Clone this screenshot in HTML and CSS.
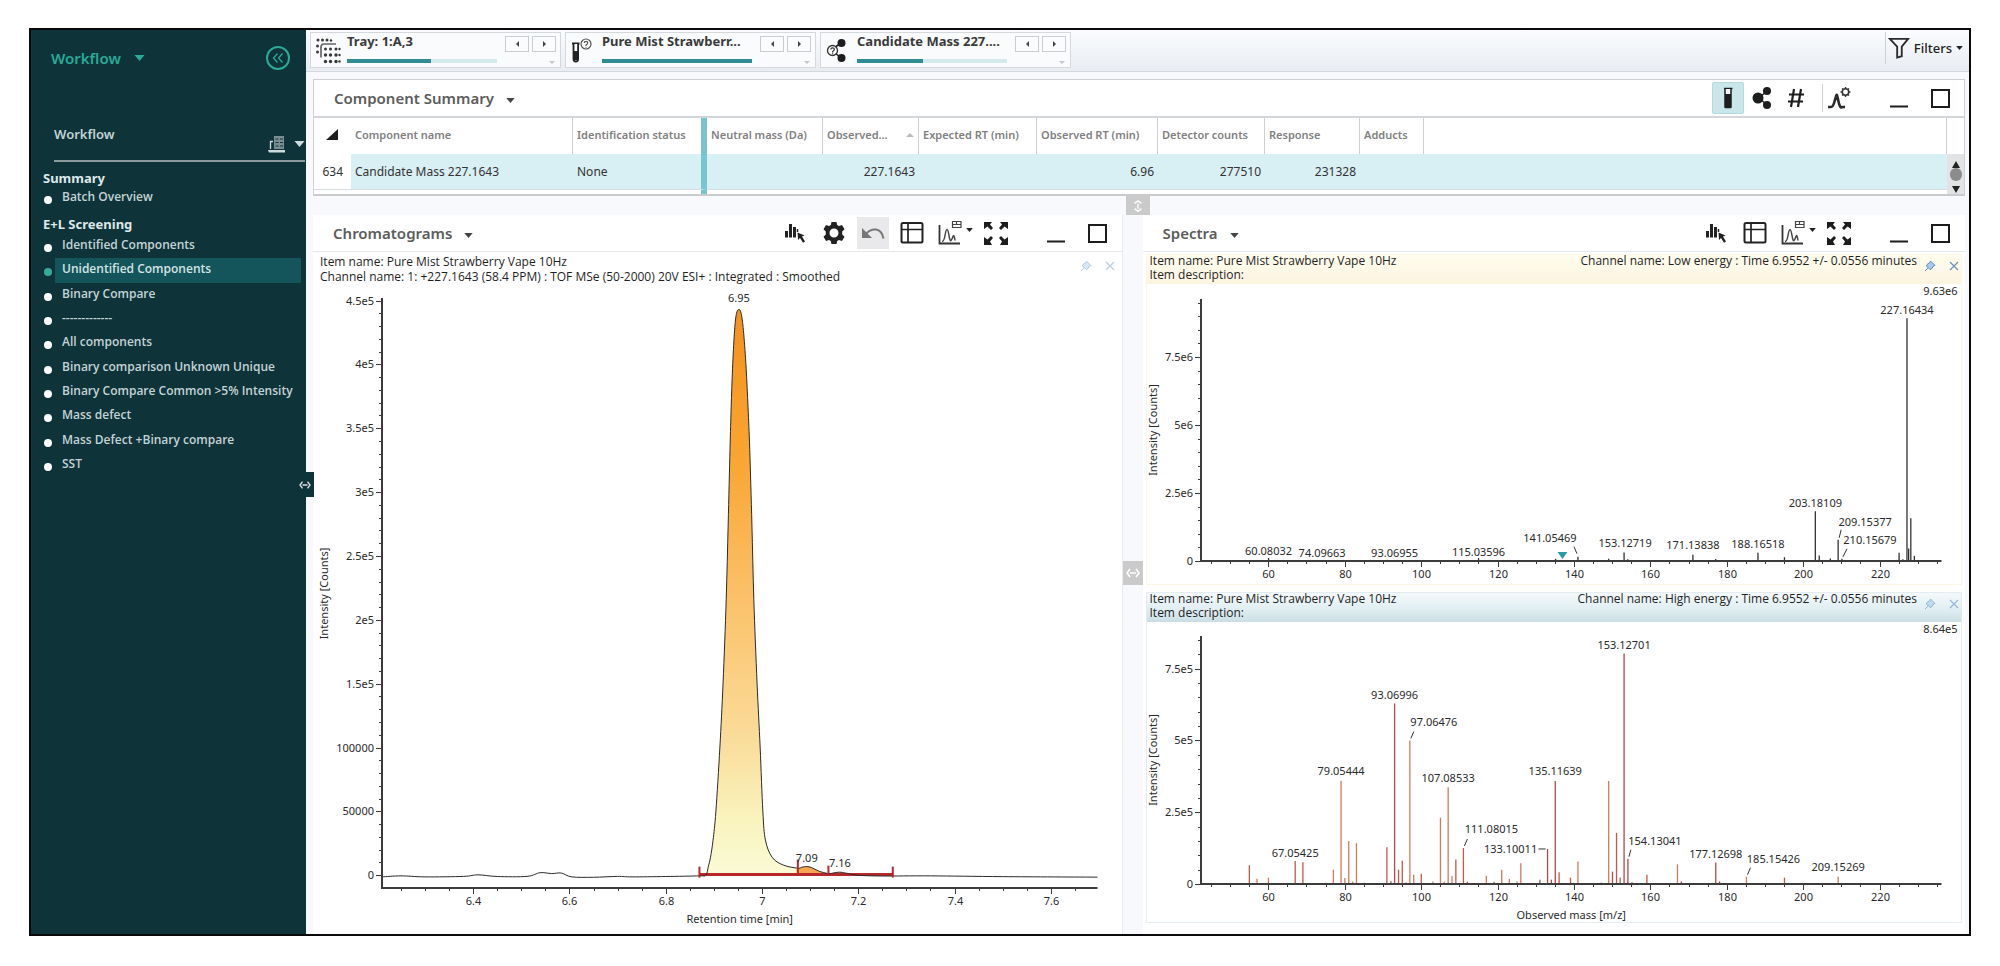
FILE: index.html
```html
<!DOCTYPE html>
<html lang="en">
<head>
<meta charset="utf-8">
<title>Workflow</title>
<meta name="viewport" content="width=device-width, initial-scale=1">
<link rel="stylesheet" href="styles.css">
</head>
<body>
<svg class="sprite" aria-hidden="true">
  <symbol id="i-caret" viewBox="0 0 10 6"><path d="M0 0h10L5 6z" fill="currentColor"/></symbol>
  <symbol id="i-collapse" viewBox="0 0 26 26"><circle cx="13" cy="13" r="11" fill="none" stroke="currentColor" stroke-width="2"/><path d="M12.500 8.500 8.500 13l4 4.500M17.500 8.500 13.500 13l4 4.500" fill="none" stroke="currentColor" stroke-width="1.300"/></symbol>
  <symbol id="i-server" viewBox="0 0 18 18"><path d="M6 1h10v13H6z" fill="currentColor" opacity=".55"/><path d="M7.500 4h3M12 4h3M7.500 7.500h3M12 7.500h3M7.500 11h3M12 11h3" stroke="#0e343a" stroke-width="1"/><path d="M5 6.500H2.500V14" fill="none" stroke="currentColor" stroke-width="1.300"/><path d="M0 15h17v2.500H1z" fill="currentColor"/></symbol>
  <symbol id="i-tray" viewBox="0 0 26 26"><g fill="#3a3a3a"><circle cx="3" cy="2" r="1.500"/><circle cx="7.500" cy="2" r="1.500"/><circle cx="12" cy="2" r="1.500"/><circle cx="16" cy="2.500" r="1.200"/><circle cx="2.500" cy="8" r="1.500"/><circle cx="2.500" cy="14" r="1.500"/><circle cx="10.500" cy="11" r="1.500"/><circle cx="15.500" cy="11" r="1.500"/><circle cx="21" cy="11" r="1.500"/><circle cx="24.500" cy="11" r="1.200"/><circle cx="10.500" cy="17" r="1.700"/><circle cx="15.500" cy="17" r="1.700"/><circle cx="21" cy="17" r="1.700"/><circle cx="24.500" cy="17" r="1.200"/><circle cx="10.500" cy="23.500" r="1.700"/><circle cx="15.500" cy="23.500" r="1.700"/><circle cx="21" cy="23.500" r="1.700"/><circle cx="24.500" cy="23.500" r="1.200"/></g><path d="M6 19.500V9q0-3 3-3h12" fill="none" stroke="#666" stroke-width="1.700"/></symbol>
  <symbol id="i-vial-q" viewBox="0 0 26 26"><path d="M2 5.500h7.500" stroke="#222" stroke-width="2"/><path d="M3.500 6v15q0 2.500 2.300 2.500T8.100 21V6" fill="#fff" stroke="#222" stroke-width="1.800"/><path d="M3.500 13h4.600v9H3.500z" fill="#222"/><circle cx="16" cy="6" r="5" fill="#fff" stroke="#555" stroke-width="1.200"/><path d="M14.300 5q0-1.700 1.700-1.700T17.700 5q0 1-1.700 2v1M16 8.700v1" fill="none" stroke="#555" stroke-width="1.200"/></symbol>
  <symbol id="i-mol-q" viewBox="0 0 26 26"><path d="m9 10 7-5M9 14l7 6" stroke="#222" stroke-width="1.600"/><circle cx="16.500" cy="5" r="4" fill="#1d1d1d"/><circle cx="16.500" cy="20" r="4" fill="#1d1d1d"/><circle cx="7.500" cy="12.500" r="5" fill="#fff" stroke="#333" stroke-width="1.300"/><path d="M5.900 11.500q0-1.700 1.700-1.700t1.700 1.700q0 1-1.700 2v1M7.600 15.300v1" fill="none" stroke="#333" stroke-width="1.200"/></symbol>
  <symbol id="i-funnel" viewBox="0 0 24 24"><path d="M2 2h20l-7 8.500V21l-5 1.500v-12z" fill="none" stroke="#2b2b2b" stroke-width="2"/></symbol>
  <symbol id="i-vial" viewBox="0 0 24 24"><path d="M8 2.500h8.500" stroke="#1d1d1d" stroke-width="1.500"/><path d="M9 3v18q0 .5.500.5h5q.5 0 .5-.5V3" fill="#eef8f9" stroke="#1d1d1d" stroke-width="1.500"/><path d="M9 8h6v13H9z" fill="#1d1d1d"/></symbol>
  <symbol id="i-mol" viewBox="0 0 24 24"><path d="M9 12 17 5M9 12l8 7" stroke="#1d1d1d" stroke-width="1.500"/><circle cx="8" cy="12" r="5.500" fill="#1d1d1d"/><circle cx="17" cy="5" r="4" fill="#1d1d1d"/><circle cx="17" cy="19" r="4" fill="#1d1d1d"/></symbol>
  <symbol id="i-hash" viewBox="0 0 24 24"><path d="M10 3 7 21M17 3l-3 18M5 8.500h15M4 15.500h15" stroke="#1d1d1d" stroke-width="2.200"/></symbol>
  <symbol id="i-peakset" viewBox="0 0 24 24"><path d="M1 21h3q2 0 3.500-5.500T9.500 9t2 6.500T15.500 21H18" fill="none" stroke="#2b2b2b" stroke-width="2.600"/><path d="M9.500 8 12 16l-2.500-2L7 16z" fill="#2b2b2b"/><circle cx="18.500" cy="6" r="3.200" fill="none" stroke="#333" stroke-width="1.500"/><path d="M18.500 1v1.500M18.500 9.500V11M13.500 6H15M22 6h1.500M15 2.500l1 1M21 8.500l1 1M22 2.500l-1 1M15 9.500l1-1" stroke="#333" stroke-width="1.400"/></symbol>
  <symbol id="i-bars" viewBox="0 0 24 24"><path d="M2 10h3v6.500H2zM6 3h3v13.500H6zM10 6h3v10.500h-3z" fill="#222"/><path d="M14.500 11V8" stroke="#222" stroke-width="1.500"/><path d="m14.500 11.500 7 3-2.500 1 3 5-2 1.200-3-4.700-2 2z" fill="#222"/></symbol>
  <symbol id="i-gear" viewBox="0 0 24 24"><path fill="#222" fill-rule="evenodd" d="M9.500 1h5l.7 3 1.800 1 3-1 2.500 4.300-2.300 2.200v3l2.300 2.200L20 20l-3-1-1.800 1-.7 3h-5l-.7-3L7 19l-3 1-2.500-4.300L3.800 13.500v-3L1.500 8.300 4 4l3 1 1.800-1zM12 7.500a4.500 4.500 0 1 0 0 9 4.500 4.500 0 0 0 0-9z"/></symbol>
  <symbol id="i-undo" viewBox="0 0 24 24"><path d="M5 13Q9 8 15 8.500q6 1 7.500 9" fill="none" stroke="#777" stroke-width="2"/><path d="M1 7v10h10z" fill="#777"/></symbol>
  <symbol id="i-grid" viewBox="0 0 24 24"><rect x="1.500" y="2" width="21" height="19.500" rx="1.500" fill="none" stroke="#222" stroke-width="2"/><path d="M8 3v18M2 8.500h20" stroke="#222" stroke-width="1.700"/></symbol>
  <symbol id="i-plot" viewBox="0 0 24 26"><path d="M1.500 5v18.500H22" fill="none" stroke="#333" stroke-width="1.800"/><path d="M4 21.500q2 0 3-6T9 9.500t2 6 2 5 2-4 2 4" fill="none" stroke="#444" stroke-width="1.500"/><path d="M14.500 1.500H23v6h-8.500zM14.500 4.500H23M18.500 1.500v3" fill="none" stroke="#444" stroke-width="1.200"/></symbol>
  <symbol id="i-expand" viewBox="0 0 24 24"><path fill="#1d1d1d" d="M0 1h8L6 3.500 9 7 7 9 3.500 5.500 0 8zM24 1v7l-3.500-2.500L17 9l-2-2 3-3.500L16 1zM0 24v-8l3.500 2.500L7 15l2 2-3 3.500L8 24zM24 24h-8l2-3.500-3-3.500 2-2 3.500 3.500L24 16z"/></symbol>
  <symbol id="i-min" viewBox="0 0 24 24"><path d="M3 20.500h18" stroke="#1d1d1d" stroke-width="2"/></symbol>
  <symbol id="i-max" viewBox="0 0 24 24"><rect x="4" y="4" width="17" height="17" fill="none" stroke="#1d1d1d" stroke-width="2"/></symbol>
  <symbol id="i-pin" viewBox="0 0 12 12"><path d="M6.500 1 11 5.500 9.500 6 7.500 9 6 9.500 2.500 6 3 4.500 6 2.500z" fill="#a9c9ea" stroke="#5d8fc4" stroke-width="1"/><path d="M4 8 1 11" stroke="#5d8fc4" stroke-width="1"/></symbol>
  <symbol id="i-x" viewBox="0 0 12 12"><path d="m2 2 8 8M10 2l-8 8" stroke="#6a93bd" stroke-width="1.200"/></symbol>
  <symbol id="i-split" viewBox="0 0 16 12"><path d="M5 2 2 6l3 4M11 2l3 4-3 4M5 6h6" fill="none" stroke="currentColor" stroke-width="1.600"/></symbol>
</svg>

<div class="frame">
  <nav class="sidebar" aria-label="Workflow">
    <div class="side-top">
      <button class="side-menu">Workflow <svg class="caret-lg"><use href="#i-caret"/></svg></button>
      <button class="side-collapse" aria-label="Collapse"><svg><use href="#i-collapse"/></svg></button>
    </div>
    <div class="side-head">
      <h2>Workflow</h2>
      <button aria-label="Workflow source"><svg class="server"><use href="#i-server"/></svg><svg class="caret-lg"><use href="#i-caret"/></svg></button>
    </div>
    <h3>Summary</h3>
    <ul class="steps">
      <li><a href="#">Batch Overview</a></li>
    </ul>
    <h3 class="second">E+L Screening</h3>
    <ul class="steps long">
      <li><a href="#">Identified Components</a></li>
      <li class="on"><a href="#" aria-current="page">Unidentified Components</a></li>
      <li><a href="#">Binary Compare</a></li>
      <li><a href="#">-------------</a></li>
      <li><a href="#">All components</a></li>
      <li><a href="#">Binary comparison Unknown Unique</a></li>
      <li><a href="#">Binary Compare Common &gt;5% Intensity</a></li>
      <li><a href="#">Mass defect</a></li>
      <li><a href="#">Mass Defect +Binary compare</a></li>
      <li><a href="#">SST</a></li>
    </ul>
    <button class="side-handle" aria-label="Resize sidebar"><svg><use href="#i-split"/></svg></button>
  </nav>

  <main class="main">
    <header class="topbar">
      <div class="picker">
        <svg class="picker-icon"><use href="#i-tray"/></svg>
        <div class="picker-text"><strong>Tray: 1:A,3</strong><div class="bar"><div class="fill" style="width:56%"></div></div></div>
        <div class="picker-nav"><button aria-label="Previous tray"><i class="tri left"></i></button><button aria-label="Next tray"><i class="tri right"></i></button><i class="tri down"></i></div>
      </div>
      <div class="picker">
        <svg class="picker-icon"><use href="#i-vial-q"/></svg>
        <div class="picker-text"><strong>Pure Mist Strawberr...</strong><div class="bar"><div class="fill" style="width:100%"></div></div></div>
        <div class="picker-nav"><button aria-label="Previous item"><i class="tri left"></i></button><button aria-label="Next item"><i class="tri right"></i></button><i class="tri down"></i></div>
      </div>
      <div class="picker">
        <svg class="picker-icon"><use href="#i-mol-q"/></svg>
        <div class="picker-text"><strong>Candidate Mass 227....</strong><div class="bar"><div class="fill" style="width:44%"></div></div></div>
        <div class="picker-nav"><button aria-label="Previous component"><i class="tri left"></i></button><button aria-label="Next component"><i class="tri right"></i></button><i class="tri down"></i></div>
      </div>
      <button class="filters"><svg class="funnel"><use href="#i-funnel"/></svg>Filters<svg class="caret-sm"><use href="#i-caret"/></svg></button>
    </header>

    <section class="panel summary">
      <div class="panel-head">
        <button class="title">Component Summary <svg class="caret"><use href="#i-caret"/></svg></button>
        <div class="tools tight">
          <button class="tool active" aria-label="Sample view"><svg><use href="#i-vial"/></svg></button>
          <button class="tool" aria-label="Structure view"><svg><use href="#i-mol"/></svg></button>
          <button class="tool" aria-label="Count view"><svg><use href="#i-hash"/></svg></button>
          <button class="tool ruled" aria-label="Peak settings"><svg><use href="#i-peakset"/></svg></button>
          <div class="win">
            <button class="tool" aria-label="Minimize"><svg><use href="#i-min"/></svg></button>
            <button class="tool" aria-label="Maximize"><svg><use href="#i-max"/></svg></button>
          </div>
        </div>
      </div>
      <div class="grid-wrap">
        <table>
          <colgroup><col class="c-row"><col class="c-name"><col class="c-id"><col class="c-mass"><col class="c-obs"><col class="c-ert"><col class="c-ort"><col class="c-det"><col class="c-res"><col class="c-add"><col></colgroup>
          <thead>
            <tr><th aria-label="Select all"><i class="corner"></i></th><th>Component name</th><th class="pinned">Identification status</th><th>Neutral mass (Da)</th><th><span class="sorted">Observed...<i class="tri up"></i></span></th><th>Expected RT (min)</th><th>Observed RT (min)</th><th>Detector counts</th><th>Response</th><th>Adducts</th><th></th></tr>
          </thead>
          <tbody>
            <tr><td class="rownum">634</td><td>Candidate Mass 227.1643</td><td class="pinned">None</td><td></td><td class="num">227.1643</td><td></td><td class="num">6.96</td><td class="num">277510</td><td class="num">231328</td><td></td><td></td></tr>
            <tr class="next"><td></td><td></td><td class="pinned"></td><td></td><td></td><td></td><td></td><td></td><td></td><td></td><td></td></tr>
          </tbody>
        </table>
        <div class="scroll" aria-hidden="true"><div class="scroll-head"></div><div class="scroll-track"><i class="tri s-up"></i><i class="thumb"></i><i class="tri s-down"></i></div></div>
      </div>
    </section>

    <div class="split-row"><button aria-label="Resize rows"><svg><use href="#i-split"/></svg></button></div>

    <div class="lower">
      <section class="panel chrom">
        <div class="panel-head">
          <button class="title">Chromatograms <svg class="caret"><use href="#i-caret"/></svg></button>
          <div class="tools">
            <button class="tool" aria-label="Select bars"><svg><use href="#i-bars"/></svg></button>
            <button class="tool" aria-label="Settings"><svg><use href="#i-gear"/></svg></button>
            <button class="tool muted" aria-label="Undo"><svg><use href="#i-undo"/></svg></button>
            <button class="tool" aria-label="Table"><svg><use href="#i-grid"/></svg></button>
            <button class="tool drop" aria-label="Plot options"><svg class="plot"><use href="#i-plot"/></svg><svg class="caret-sm"><use href="#i-caret"/></svg></button>
            <button class="tool" aria-label="Expand"><svg><use href="#i-expand"/></svg></button>
            <div class="win">
              <button class="tool" aria-label="Minimize"><svg><use href="#i-min"/></svg></button>
              <button class="tool" aria-label="Maximize"><svg><use href="#i-max"/></svg></button>
            </div>
          </div>
        </div>
        <div class="plot-head plain">
          <p>Item name: Pure Mist Strawberry Vape 10Hz<br>Channel name: 1: +227.1643 (58.4 PPM) : TOF MSe (50-2000) 20V ESI+ : Integrated : Smoothed</p>
          <div class="pins faint"><button aria-label="Pin"><svg><use href="#i-pin"/></svg></button><button aria-label="Close"><svg><use href="#i-x"/></svg></button></div>
        </div>
        <svg class="chart" id="chrom" role="img" aria-label="Chromatogram"></svg>
      </section>

      <div class="split-col"><button aria-label="Resize columns"><svg><use href="#i-split"/></svg></button></div>

      <section class="panel spectra">
        <div class="panel-head">
          <button class="title">Spectra <svg class="caret"><use href="#i-caret"/></svg></button>
          <div class="tools">
            <button class="tool" aria-label="Select bars"><svg><use href="#i-bars"/></svg></button>
            <button class="tool" aria-label="Table"><svg><use href="#i-grid"/></svg></button>
            <button class="tool drop" aria-label="Plot options"><svg class="plot"><use href="#i-plot"/></svg><svg class="caret-sm"><use href="#i-caret"/></svg></button>
            <button class="tool" aria-label="Expand"><svg><use href="#i-expand"/></svg></button>
            <div class="win">
              <button class="tool" aria-label="Minimize"><svg><use href="#i-min"/></svg></button>
              <button class="tool" aria-label="Maximize"><svg><use href="#i-max"/></svg></button>
            </div>
          </div>
        </div>
        <div class="cards">
          <article class="card low">
            <div class="plot-head">
              <p>Item name: Pure Mist Strawberry Vape 10Hz<br>Item description:</p>
              <p class="channel">Channel name: Low energy : Time 6.9552 +/- 0.0556 minutes</p>
              <div class="pins"><button aria-label="Pin"><svg><use href="#i-pin"/></svg></button><button aria-label="Close"><svg><use href="#i-x"/></svg></button></div>
            </div>
            <svg class="chart" id="low" role="img" aria-label="Low energy spectrum"></svg>
          </article>
          <article class="card high">
            <div class="plot-head">
              <p>Item name: Pure Mist Strawberry Vape 10Hz<br>Item description:</p>
              <p class="channel">Channel name: High energy : Time 6.9552 +/- 0.0556 minutes</p>
              <div class="pins soft"><button aria-label="Pin"><svg><use href="#i-pin"/></svg></button><button aria-label="Close"><svg><use href="#i-x"/></svg></button></div>
            </div>
            <svg class="chart" id="high" role="img" aria-label="High energy spectrum"></svg>
          </article>
        </div>
      </section>
    </div>
  </main>
</div>
<script src="charts.js"></script>
</body>
</html>
```

FILE: styles.css
```css
* { box-sizing: border-box; }
html { height: 100%; }
body {
  margin: 0;
  height: 100%;
  min-height: 760px;
  padding: 28px 29px 30px;
  display: flex;
  background: #fff;
  color: #333;
  font: 11px/15px "Noto Sans", "Open Sans", sans-serif;
}
button { margin: 0; padding: 0; border: 0; background: none; color: inherit; font: inherit; cursor: pointer; }
svg { display: block; flex: none; }
h2, h3, p, ul { margin: 0; padding: 0; }
.sprite { position: absolute; width: 0; height: 0; }
.frame { flex: 1; min-width: 0; display: flex; border: 2px solid #0a0a0a; background: #f8fafc; }
.caret { width: 9px; height: 5px; color: #444; }
.caret-lg { width: 11px; height: 6px; }
.caret-sm { width: 7px; height: 4px; color: #222; }

/* Sidebar */
.sidebar { position: relative; flex: none; width: 275px; background: #0e343a; color: #c3d3d5; }
.side-top { display: flex; justify-content: space-between; align-items: center; height: 56px; padding: 0 15px 0 20px; color: #2aaa97; }
.side-menu { display: flex; align-items: center; gap: 13px; font-size: 15px; font-weight: 600; }
.side-collapse svg { width: 26px; height: 26px; }
.side-head { display: flex; justify-content: space-between; align-items: flex-start; height: 76px; margin: 0 1px 0 23px; padding-top: 38px; border-bottom: 2px solid #8b9b9d; }
.side-head h2 { font-size: 13px; line-height: 20px; font-weight: 600; }
.side-head button { display: flex; align-items: center; gap: 8px; padding-top: 11px; color: #cfdcdd; }
.server { width: 18px; height: 18px; }
.sidebar h3 { padding: 6px 0 0 12px; font-size: 13px; line-height: 20px; font-weight: 700; color: #dfe8e9; }
.sidebar h3.second { padding-top: 6px; }
.steps { display: grid; list-style: none; padding: 0 5px 0 13px; }
.steps li { display: grid; grid-template-columns: 8px 1fr; column-gap: 3px; align-items: center; min-height: 20px; }
.steps li::before { content: ""; width: 8px; height: 8px; margin-top: 4px; border-radius: 50%; background: #fff; }
.steps li.on::before { background: #3aa99b; }
.steps a { display: flex; align-items: center; height: 100%; padding: 0 7px 3px; color: inherit; text-decoration: none; font-family: "Open Sans", sans-serif; font-size: 12px; font-weight: 600; white-space: nowrap; }
.steps .on a { background: #14545b; color: #d3e4e6; }
.steps.long { height: 243px; grid-auto-rows: 1fr; }
.side-handle { position: absolute; left: calc(100% - 10px); top: 442px; width: 18px; height: 25px; display: grid; place-items: center; background: #0e343a; color: #d8e3e4; }
.side-handle svg { width: 14px; height: 10px; }

/* Top bar */
.main { flex: 1; min-width: 0; display: flex; flex-direction: column; background: #f7f9fc; }
.topbar { display: flex; gap: 4px; height: 42px; padding: 2px 4px 4px; border-bottom: 1px solid #d3d7de; background: linear-gradient(#fafcff, #e9ecf1); }
.picker { display: flex; align-items: flex-start; width: 251px; height: 36px; padding: 3px 4px 0 4px; border: 1px solid #d5d8dd; background: #f9fbfd; }
.picker-icon { width: 26px; height: 26px; margin-top: 2px; }
.picker-text { width: 150px; margin-left: 6px; }
.picker strong { display: block; height: 23px; font-size: 13px; line-height: 16px; font-weight: 700; margin-top: -3px; margin-bottom: 3px; color: #3a3a3a; white-space: nowrap; }
.bar { height: 4px; background: #d3e9eb; }
.fill { height: 100%; background: #2f8c92; }
.picker-nav { display: flex; flex-wrap: wrap; justify-content: flex-end; gap: 9px 3px; margin-left: auto; width: 52px; }
.picker-nav button { width: 24px; height: 16px; display: grid; place-items: center; border: 1px solid #c9ccd0; background: #fbfcfd; }
.tri { display: block; width: 0; height: 0; border: 3px solid transparent; }
.tri.left { border-right-color: #444; border-left-width: 0; }
.tri.right { border-left-color: #444; border-right-width: 0; }
.tri.down { border-top-color: #c4c7ca; border-bottom-width: 0; margin-right: 1px; }
.filters { display: flex; align-items: center; gap: 4px; height: 32px; margin-left: auto; padding: 0 2px 0 2px; border-left: 1px solid #cdd1d6; font-size: 13px; font-weight: 500; color: #222; }
.funnel { width: 22px; height: 24px; }

/* Panels */
.panel { display: flex; flex-direction: column; background: #fff; }
.panel-head { display: flex; align-items: center; justify-content: space-between; height: 37px; padding: 0 9px 0 20px; border-bottom: 1px solid #e3e8ec; }
.title { display: flex; align-items: center; gap: 12px; font-size: 15px; line-height: 24px; font-weight: 600; color: #5c5c5c; white-space: nowrap; }
.title .caret { margin-top: 4px; }
.tools { display: flex; align-items: center; gap: 7px; }
.tool { width: 32px; height: 32px; display: grid; place-items: center; }
.tool svg { width: 24px; height: 24px; }
.tools.tight { gap: 2px; }
.tool.active { background: #c9e7ea; border: 1px solid #b5d9dc; border-radius: 2px; }
.tool.muted { background: #e9e9eb; }
.tool.ruled { width: 41px; padding-left: 8px; position: relative; }
.tool.ruled::before { content: ""; position: absolute; left: 8px; top: 2px; height: 28px; width: 1px; background: #cfcfcf; }
.tool.drop { width: 38px; display: flex; align-items: center; gap: 4px; }
.tool.drop .plot { width: 24px; height: 26px; margin-left: 3px; }
.tool.drop .caret-sm { width: 7px; height: 4px; margin-bottom: 6px; }
.win { display: flex; gap: 9px; margin-left: 21px; }
.tight .win { margin-left: 26px; }

.summary { margin: 7px 4px 0 7px; border: 1px solid #ccd0d4; border-bottom: 2px solid #c9cbcd; }
.summary .panel-head { border-bottom: 2px solid #d3d6d9; height: 38px; padding-right: 8px; }
.grid-wrap { display: flex; }
table { flex: 1; min-width: 0; table-layout: fixed; border-collapse: separate; border-spacing: 0; }
.c-row { width: 37px; } .c-name { width: 222px; } .c-id { width: 134px; } .c-mass { width: 116px; }
.c-obs { width: 96px; } .c-ert { width: 118px; } .c-ort { width: 121px; } .c-det { width: 107px; }
.c-res { width: 95px; } .c-add { width: 64px; }
th, td { padding: 0 4px; font-size: 12px; font-weight: 400; text-align: left; white-space: nowrap; }
th { height: 36px; padding-bottom: 3px; border-right: 1px solid #cfcfcf; color: #808080; font-size: 11px; font-weight: 600; }
th:first-child { border-right: 0; }
td { height: 36px; background: #d8eff3; border-bottom: 1px solid #d5dfe2; color: #333; }
td.rownum { background: #fff; padding: 0 8px 0 0; text-align: right; }
td.num { text-align: right; }
.next td { height: 4px; padding: 0; background: #fff; border: 0; }
th.pinned, td.pinned, .next td.pinned { border-right: 6px solid #79c5cf; }
.sorted { display: flex; align-items: center; justify-content: space-between; }
.tri.up { border: 4px solid transparent; border-top-width: 0; border-bottom-color: #bbb; }
.corner { display: block; margin-left: 8px; width: 12px; height: 11px; background: #1d1d1d; clip-path: polygon(100% 0, 100% 100%, 0 100%); }
.scroll { width: 17px; display: flex; flex-direction: column; }
.scroll-head { height: 36px; }
.scroll-track { flex: 1; display: flex; flex-direction: column; align-items: center; justify-content: flex-end; background: #e1e3e4; padding-bottom: 1px; }
.thumb { width: 12px; height: 13px; margin-bottom: 5px; border-radius: 6px; background: #8c8c8c; }
.tri.s-up { border: 4px solid transparent; border-top-width: 0; border-bottom: 7px solid #222; }
.tri.s-down { border: 4px solid transparent; border-bottom-width: 0; border-top: 7px solid #222; }

/* Splitters */
.split-row { display: flex; justify-content: center; height: 19px; }
.split-row button, .split-col button { display: grid; place-items: center; background: #cacaca; color: #fff; }
.split-row button { width: 24px; }
.split-row svg { width: 14px; height: 12px; transform: rotate(90deg); }
.split-col { display: flex; align-items: center; width: 20px; flex: none; padding-bottom: 4px; }
.split-col button { width: 20px; height: 24px; }
.split-col svg { width: 16px; height: 12px; }

/* Plots */
.lower { flex: 1; min-height: 0; display: flex; padding: 0 4px 0 7px; }
.chrom { flex: 809; min-width: 0; border-right: 1px solid #e7ecf2; }
.spectra { flex: 823; min-width: 0; }
.plot-head { display: flex; align-items: flex-start; height: 29px; padding-left: 3px; color: #1f1f1f; font-family: "Open Sans", sans-serif; font-size: 12px; line-height: 14px; white-space: nowrap; }
.plot-head p { margin-top: -1px; }
.plot-head.plain { height: 33px; padding: 3px 5px 0 7px; line-height: 15px; }
.plot-head > :nth-child(2) { margin-left: auto; }
.pins { display: flex; gap: 12px; margin: 5px 1px 0 7px; }
.pins svg { width: 12px; height: 12px; }
.pins.faint { opacity: .45; }
.pins.soft { opacity: .6; }
.chart { flex: 1 1 0; min-height: 0; width: 100%; overflow: visible; }
.cards { flex: 1; min-height: 0; display: flex; flex-direction: column; gap: 7px; padding: 2px 3px 11px; }
.card { flex: 1; min-height: 0; display: flex; flex-direction: column; border: 1px solid #fbf5e3; background: #fff; }
.low .plot-head { background: linear-gradient(#fffdee, #fdf3e1); }
.high { border-color: #e3edf1; }
.high .plot-head { background: linear-gradient(#f4f9fb, #dfedf1 60%, #c9dee3); }

.axis { stroke: #3c3c3c; stroke-width: 2; }
.tick { stroke: #3c3c3c; stroke-width: 1; }
.chart text { font-size: 11px; fill: #2a2a2a; dominant-baseline: central; text-anchor: middle; }
.chart text.end { text-anchor: end; }
.trace { fill: none; stroke: #2a2a2a; stroke-width: 1; }
.mark { stroke: #b8282a; stroke-width: 2; }
.base { stroke: #b8282a; stroke-width: 3; }
.lead { stroke: #333; stroke-width: 1; }
.marker { fill: #2b9aa5; }
```

FILE: charts.js
```js
const NS = "http://www.w3.org/2000/svg";

function add(parent, name, attrs, text) {
  const el = document.createElementNS(NS, name);
  for (const key in attrs) el.setAttribute(key, attrs[key]);
  if (text !== undefined) el.textContent = text;
  parent.appendChild(el);
  return el;
}

// Draws both axes and returns the data-to-pixel scales.
function axes(svg, o) {
  const box = svg.getBoundingClientRect();
  const w = box.width, h = box.height;
  svg.replaceChildren();
  svg.setAttribute("viewBox", `0 0 ${w} ${h}`);
  const left = o.left, right = w - o.right, top = o.top, bottom = h - o.bottom;
  const x = v => left + (v - o.x0) / (o.x1 - o.x0) * (right - left);
  const y = v => bottom - (v - o.y0) / (o.y1 - o.y0) * (bottom - top);
  const tick = (x1, y1, x2, y2) => add(svg, "line", { class: "tick", x1, y1, x2, y2 });
  for (let i = 0; i * o.yMinor <= o.y1; i++) {
    const py = Math.round(y(i * o.yMinor)) + 0.5;
    const major = i % 5 === 0;
    tick(left - (major ? 6 : 3), py, left, py);
    if (major) add(svg, "text", { class: "end", x: left - 8, y: py - 1 }, o.yLabels[i / 5]);
  }
  for (let i = Math.ceil(o.x0 / o.xMinor); i * o.xMinor <= o.x1; i++) {
    const px = Math.round(x(i * o.xMinor)) + 0.5;
    const major = i % 4 === 0;
    tick(px, bottom, px, bottom + (major ? 6 : 3));
    if (major) add(svg, "text", { x: px, y: bottom + 12 }, String(Math.round(i * o.xMinor * 10) / 10));
  }
  const mid = (o.titleY || (top + bottom) / 2);
  add(svg, "text", { transform: `translate(${o.titleX} ${mid}) rotate(-90)` }, "Intensity [Counts]");
  if (o.xTitle) add(svg, "text", { x: (left + right) / 2, y: bottom + 30 }, o.xTitle);
  if (o.peak) add(svg, "text", { class: "end", x: w - 4, y: 6 }, o.peak);
  const line = () => {
    add(svg, "line", { class: "axis", x1: left, y1: top, x2: left, y2: bottom + 1 });
    add(svg, "line", { class: "axis", x1: left - 1, y1: bottom, x2: right, y2: bottom });
  };
  return { x, y, line };
}

function smooth(points) {
  let d = `M${points[0]}`;
  for (let i = 0; i < points.length - 1; i++) {
    const a = points[Math.max(i - 1, 0)], b = points[i], c = points[i + 1], e = points[Math.min(i + 2, points.length - 1)];
    d += `C${b[0] + (c[0] - a[0]) / 6} ${b[1] + (c[1] - a[1]) / 6} ${c[0] - (e[0] - b[0]) / 6} ${c[1] - (e[1] - b[1]) / 6} ${c[0]} ${c[1]}`;
  }
  return d;
}

const before = [[6.211, -1300], [6.25, -500], [6.3, -1300], [6.38, -900], [6.41, 300], [6.45, -1000], [6.512, -900], [6.539, 2000], [6.563, 1300], [6.583, 1700], [6.605, -1300], [6.65, -1600], [6.7, -900], [6.73, -1300], [6.8, -1000], [6.87, -500]];
const main = [[6.8834, 0], [6.8886, 7000], [6.893, 14100], [6.8983, 27500], [6.9042, 50200], [6.9125, 100400], [6.9191, 150600], [6.9256, 215700], [6.9297, 275000], [6.9335, 333300], [6.9359, 366000], [6.9388, 397000], [6.9425, 424000], [6.9465, 439000], [6.952, 443100], [6.9572, 439000], [6.962, 424000], [6.967, 397000], [6.971, 366000], [6.9745, 333300], [6.979, 275000], [6.983, 215700], [6.9897, 150600], [6.9961, 100400], [7.0017, 50200], [7.0071, 27500], [7.021, 14100], [7.0439, 8000], [7.0744, 5500]];
const second = [[7.0744, 5500], [7.083, 6300], [7.0929, 6800], [7.103, 6000], [7.118, 3200], [7.138, 1300]];
const third = [[7.138, 1300], [7.15, 1900], [7.1613, 2400], [7.175, 1600], [7.199, 0]];
const after = [[7.25, -600], [7.35, -500], [7.5, -1100], [7.697, -1500]];

function drawChromatogram() {
  const svg = document.getElementById("chrom");
  const s = axes(svg, {
    left: 69, right: 24, top: 13, bottom: 46, x0: 6.2105, x1: 7.697, y0: -10000, y1: 452000,
    xMinor: 0.05, yMinor: 10000, titleX: 10, titleY: (svg.getBoundingClientRect().height - 32) / 2,
    yLabels: ["0", "50000", "100000", "1.5e5", "2e5", "2.5e5", "3e5", "3.5e5", "4e5", "4.5e5"],
    xTitle: "Retention time [min]"
  });
  const px = list => list.map(p => [s.x(p[0]), s.y(p[1])]);
  const defs = add(svg, "defs", {});
  const grad = add(defs, "linearGradient", { id: "heat", x1: 0, y1: 0, x2: 0, y2: 1 });
  [["0", "#f4911e"], [".25", "#f9a42f"], [".5", "#fbc067"], [".75", "#fadb98"], [".9", "#f9f3bd"], ["1", "#fafad6"]]
    .forEach(c => add(grad, "stop", { offset: c[0], "stop-color": c[1] }));
  const close = list => `L${s.x(list[list.length - 1][0])} ${s.y(0)}L${s.x(list[0][0])} ${s.y(0)}Z`;
  add(svg, "path", { fill: "url(#heat)", d: smooth(px(main)) + close(main) });
  add(svg, "path", { fill: "#f6a650", d: smooth(px(second)) + close(second) });
  add(svg, "path", { fill: "#d98a4a", d: smooth(px(third)) + close(third) });
  const base = s.y(500);
  add(svg, "line", { class: "base", x1: s.x(6.87), x2: s.x(7.2717), y1: base, y2: base });
  add(svg, "path", { class: "trace", d: smooth(px([...before, ...main, ...second.slice(1), ...third.slice(1), ...after])) });
  [[6.87, 8, 3], [7.0744, 15, 0], [7.138, 9, 0], [7.2717, 8, 3]].forEach(m =>
    add(svg, "line", { class: "mark", x1: s.x(m[0]), x2: s.x(m[0]), y1: base - m[1], y2: base + m[2] }));
  add(svg, "text", { x: s.x(6.952), y: s.y(443100) - 12 }, "6.95");
  add(svg, "text", { x: s.x(7.093), y: s.y(0) - 18 }, "7.09");
  add(svg, "text", { x: s.x(7.162), y: s.y(0) - 13 }, "7.16");
  s.line();
}

// Each peak: m/z, counts, then optionally label, label offset x, label offset y, leader [x1, y1, x2, y2] from the peak top.
const lowPeaks = [
  [60.08032, 1.1e5, "60.08032", 0, -8], [74.09663, 3e4, "74.09663", 0, -8], [93.06955, 3e4, "93.06955", 0, -8],
  [115.03596, 1.1e5, "115.03596", 0, -7], [135.2, 8e4], [141.05469, 1.6e5, "141.05469", -28, -19, [-4, -10, -1, -3]], [149.1, 8e4],
  [153.12719, 3.15e5, "153.12719", 1, -10], [154.1, 6e4], [171.13838, 2.3e5, "171.13838", 0, -10], [177.1, 7e4],
  [188.16518, 3.05e5, "188.16518", 0, -9], [195.1, 1.4e5], [203.18109, 1.83e6, "203.18109", 0, -9], [204.2, 2e5], [207.1, 9e4],
  [209.15377, 7.8e5, "209.15377", 27, -18, [3, -10, 1, -2]], [210.15679, 8e4, "210.15679", 28, -19, [5, -10, 1, -2]],
  [225.1, 3.05e5], [226.1, 6e4], [227.16434, 8.92e6, "227.16434", 0, -9], [227.6, 4.6e5], [228.17, 1.57e6], [229.1, 1.9e5]
];
const D = "#b04a4a", R = "#c4574a", O = "#d27a5a";
const highPeaks = [
  [55.05, 65000, R], [57.05, 18600, O], [60.04, 22000, O], [67.05425, 80000, R, "67.05425", 0, -9], [69.07, 75500, R],
  [75.1, 4000, R], [77.04, 50000, O], [79.05444, 360000, O, "79.05444", 0, -10], [80.06, 21000, O], [81.07, 150000, O],
  [82.1, 9000, O], [83.08, 142000, O], [85.1, 4000, R], [91.05, 128000, R], [92.1, 10000, D], [93.06996, 629000, D, "93.06996", 0, -9],
  [94.1, 50000, R], [95.08, 81000, R], [96.1, 5000, D], [97.06476, 500000, O, "97.06476", 24, -19, [4, -9, 1, -2]], [98.07, 32500, O],
  [100.05, 36000, R], [103.1, 9000, O], [105.07, 231000, O], [106.1, 8000, O], [107.08533, 337000, O, "107.08533", 0, -10],
  [108.09, 28000, O], [109.1, 85000, R], [111.08015, 125500, R, "111.08015", 28, -19, [4, -9, 1, -2]], [112.1, 8000, R],
  [117.07, 29000, O], [119.1, 8000, R], [121.1, 50000, O], [123.1, 17500, O], [125.1, 9000, O], [126.1, 72000, O], [131.1, 15000, D],
  [133.10011, 122000, D, "133.10011", -37, 0, [-9, 0, -2, 0]], [134.1, 15000, D], [135.11639, 359000, D, "135.11639", 0, -10],
  [136.12, 41000, R], [139.1, 22000, R], [141.05, 78000, O], [147.2, 5000, D], [149.1, 359000, O], [150.1, 43000, D], [151.15, 178000, R],
  [152.1, 23000, R], [153.12701, 803000, D, "153.12701", 0, -9], [154.13041, 88000, D, "154.13041", 27, -18, [3, -9, 1, -2]],
  [155.2, 6000, D], [159.1, 32500, R], [167.1, 68500, O], [168.1, 9000, D], [177.12698, 74500, D, "177.12698", 0, -9], [178.1, 9000, D],
  [185.15426, 25500, O, "185.15426", 27, -18, [4, -9, 1, -2]], [195.1, 22000, R], [209.15269, 25500, O, "209.15269", 0, -10]
];

function drawPeak(svg, s, mz, counts, color, label, dx, dy, lead) {
  const x = s.x(mz), y = s.y(counts);
  add(svg, "line", { x1: x, x2: x, y1: y, y2: s.y(0), stroke: color, "stroke-width": 1.3 });
  if (!label) return;
  add(svg, "text", { x: x + dx, y: y + dy }, label);
  if (lead) add(svg, "line", { class: "lead", x1: x + lead[0], y1: y + lead[1], x2: x + lead[2], y2: y + lead[3] });
}

const spectrum = { left: 54, right: 20, x0: 42.4, x1: 236.2, xMinor: 5, titleX: 5 };

function drawSpectra() {
  let svg = document.getElementById("low");
  let s = axes(svg, { ...spectrum, top: 15, bottom: 23, y0: 0, y1: 9.63e6, yMinor: 5e5, yLabels: ["0", "2.5e6", "5e6", "7.5e6"], peak: "9.63e6" });
  lowPeaks.forEach(p => drawPeak(svg, s, p[0], p[1], "#333", ...p.slice(2)));
  const mx = s.x(137), my = s.y(0) - 9;
  add(svg, "path", { class: "marker", d: `M${mx - 5} ${my}h10l-5 7z` });
  s.line();
  svg = document.getElementById("high");
  s = axes(svg, { ...spectrum, top: 14, bottom: 38, y0: 0, y1: 8.64e5, yMinor: 5e4, yLabels: ["0", "2.5e5", "5e5", "7.5e5"], peak: "8.64e5", xTitle: "Observed mass [m/z]" });
  highPeaks.forEach(p => drawPeak(svg, s, ...p));
  s.line();
}

function draw() {
  drawChromatogram();
  drawSpectra();
}
draw();
window.addEventListener("resize", draw);
```
